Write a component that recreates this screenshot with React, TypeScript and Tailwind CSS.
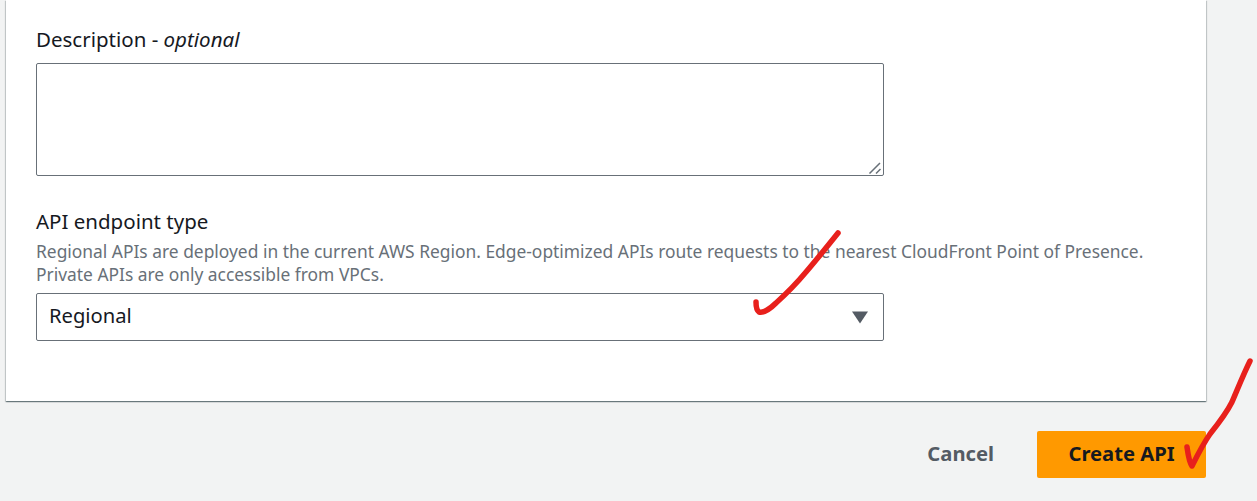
export default function App() {
  return (
    <div className="relative h-[501px] w-[1257px] overflow-hidden bg-[#f2f3f3] font-['Noto_Sans',sans-serif] text-[#16191f]">
      {/* FORM CARD */}
      <div className="ml-[6px] h-[401px] w-[1200px] bg-white pl-[30px] pt-[26px] shadow-[0_1px_1px_0_rgba(0,28,36,0.4),1px_1px_1px_0_rgba(0,28,36,0.15),-1px_1px_1px_0_rgba(0,28,36,0.15)]">
        <label className="block h-[26px] text-[20.5px] leading-[26px]">
          Description - <i>optional</i>
        </label>

        <div className="relative mt-[11px] h-[113px] w-[848px]">
          <textarea className="block h-full w-full resize-none rounded-[2px] border border-[#687078] bg-white" />
          <svg className="absolute bottom-[2px] right-[2px]" width="14" height="12" viewBox="0 0 14 12" fill="none">
            <path d="M1.5 11.5L12 1M8 11.5L12.5 7" stroke="#687078" strokeWidth="1.5" />
          </svg>
        </div>

        <div className="mt-[32px] h-[26px] text-[20.5px] leading-[26px]">
          API endpoint type
        </div>
        <p className="mt-[6px] w-[1140px] text-[17.4px] leading-[23px] text-[#687078]">
          Regional APIs are deployed in the current AWS Region. Edge-optimized APIs route requests to the nearest CloudFront Point of Presence.
          <br />
          Private APIs are only accessible from VPCs.
        </p>

        <div className="mt-[7px] flex h-[48px] w-[848px] items-center justify-between rounded-[2px] border border-[#687078] pl-[12px] pr-[15px]">
          <span className="pb-[4px] text-[20.2px]">Regional</span>
          <svg width="16" height="13" viewBox="0 0 16 13">
            <path d="M0 0.5h16L8 12.5z" fill="#545b64" />
          </svg>
        </div>
      </div>

      {/* ACTIONS */}
      <div className="mt-[30px] flex w-[1206px] items-center justify-end gap-[43px]">
        <button type="button" className="pb-[2px] text-[20.2px] font-bold text-[#545b64]">
          Cancel
        </button>
        <button
          type="button"
          className="h-[47px] w-[169px] rounded-[2px] bg-[#ff9900] pb-[2px] text-[20.2px] font-bold text-[#16191f]"
        >
          Create API
        </button>
      </div>

      {/* RED MARKS DRAWN ON THE SCREENSHOT */}
      <svg className="pointer-events-none absolute left-0 top-0" width="1257" height="501" fill="none">
        <path
          d="M838 233C826 248 818 258 806 272C796 284 786 294 776 303C770 309 763 313 759 312C756 310 756 306 756 302"
          stroke="#e8201c"
          strokeWidth="5.5"
          strokeLinecap="round"
          strokeLinejoin="round"
        />
        <path
          d="M1250 361C1244 373 1238 388 1232 402C1226 414 1218 424 1210 434C1203 444 1197 456 1192 466C1189 462 1188 454 1187 447"
          stroke="#e8201c"
          strokeWidth="5.5"
          strokeLinecap="round"
          strokeLinejoin="round"
        />
      </svg>
    </div>
  );
}
